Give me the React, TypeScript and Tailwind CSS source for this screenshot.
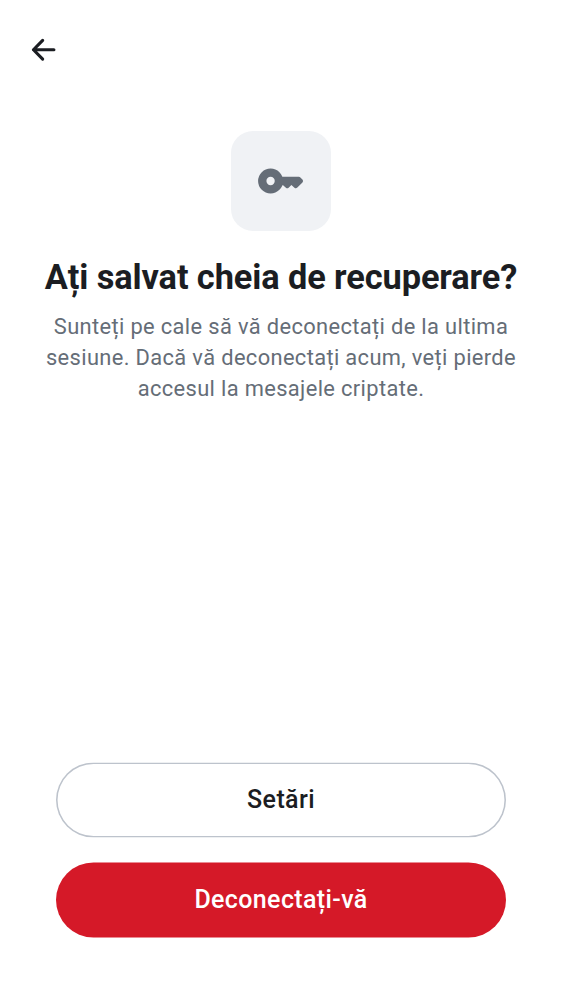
export default function App() {
  return (
    <main className="flex h-[1000px] w-full flex-col bg-white font-['Roboto',sans-serif] text-[#1b1d22]">
      <header className="flex h-[100px] items-center pl-[25px]">
        <button aria-label="Înapoi" className="size-[37.5px]">
          <svg viewBox="0 0 24 24" className="size-[37.5px]" fill="none" stroke="currentColor" strokeWidth="2" strokeLinecap="round" strokeLinejoin="round">
            <path d="M11.3 6 5.4 12l5.9 6M5.4 12h13.1" />
          </svg>
        </button>
      </header>
      <section className="flex flex-col items-center pt-[31px] text-center">
        <div className="flex size-[100px] items-center justify-center rounded-[22px] bg-[#f0f2f5] text-[#656d77]">
          <svg viewBox="0 0 24 24" className="size-[50px]" fill="currentColor">
            <circle cx="7" cy="12" r="4" fill="none" stroke="currentColor" strokeWidth="4" />
            <path d="M11.5 10h9.075a1.033 1.033 0 0 1 .725.3l1 1a1.034 1.034 0 0 1 0 1.4l-2.45 2.45a1.033 1.033 0 0 1-1.4.05L17 13.9l-1.35 1.35a1 1 0 0 1-1.3 0L13 14h-1.5Z" />
          </svg>
        </div>
        <h1 className="mt-[25px] text-[34.375px] leading-[42px] font-bold tracking-[-0.1px] whitespace-nowrap">Ați salvat cheia de recuperare?</h1>
        <p className="mt-[13px] text-[21.875px] leading-[31px] tracking-[0.36px] whitespace-nowrap text-[#656d77]">
          Sunteți pe cale să vă deconectați de la ultima<br />
          sesiune. Dacă vă deconectați acum, veți pierde<br />
          accesul la mesajele criptate.
        </p>
      </section>
      <footer className="mt-auto flex -translate-y-[0.5px] flex-col gap-[25px] px-14 pb-[62px] text-[25px] font-medium tracking-[0.37px]">
        <button className="h-[75px] rounded-full pb-0.5 shadow-[inset_0_0_0_1.56px_#bdc3cc]">Setări</button>
        <button className="h-[75px] rounded-full bg-[#d51928] pb-0.5 text-white">Deconectați-vă</button>
      </footer>
    </main>
  );
}
